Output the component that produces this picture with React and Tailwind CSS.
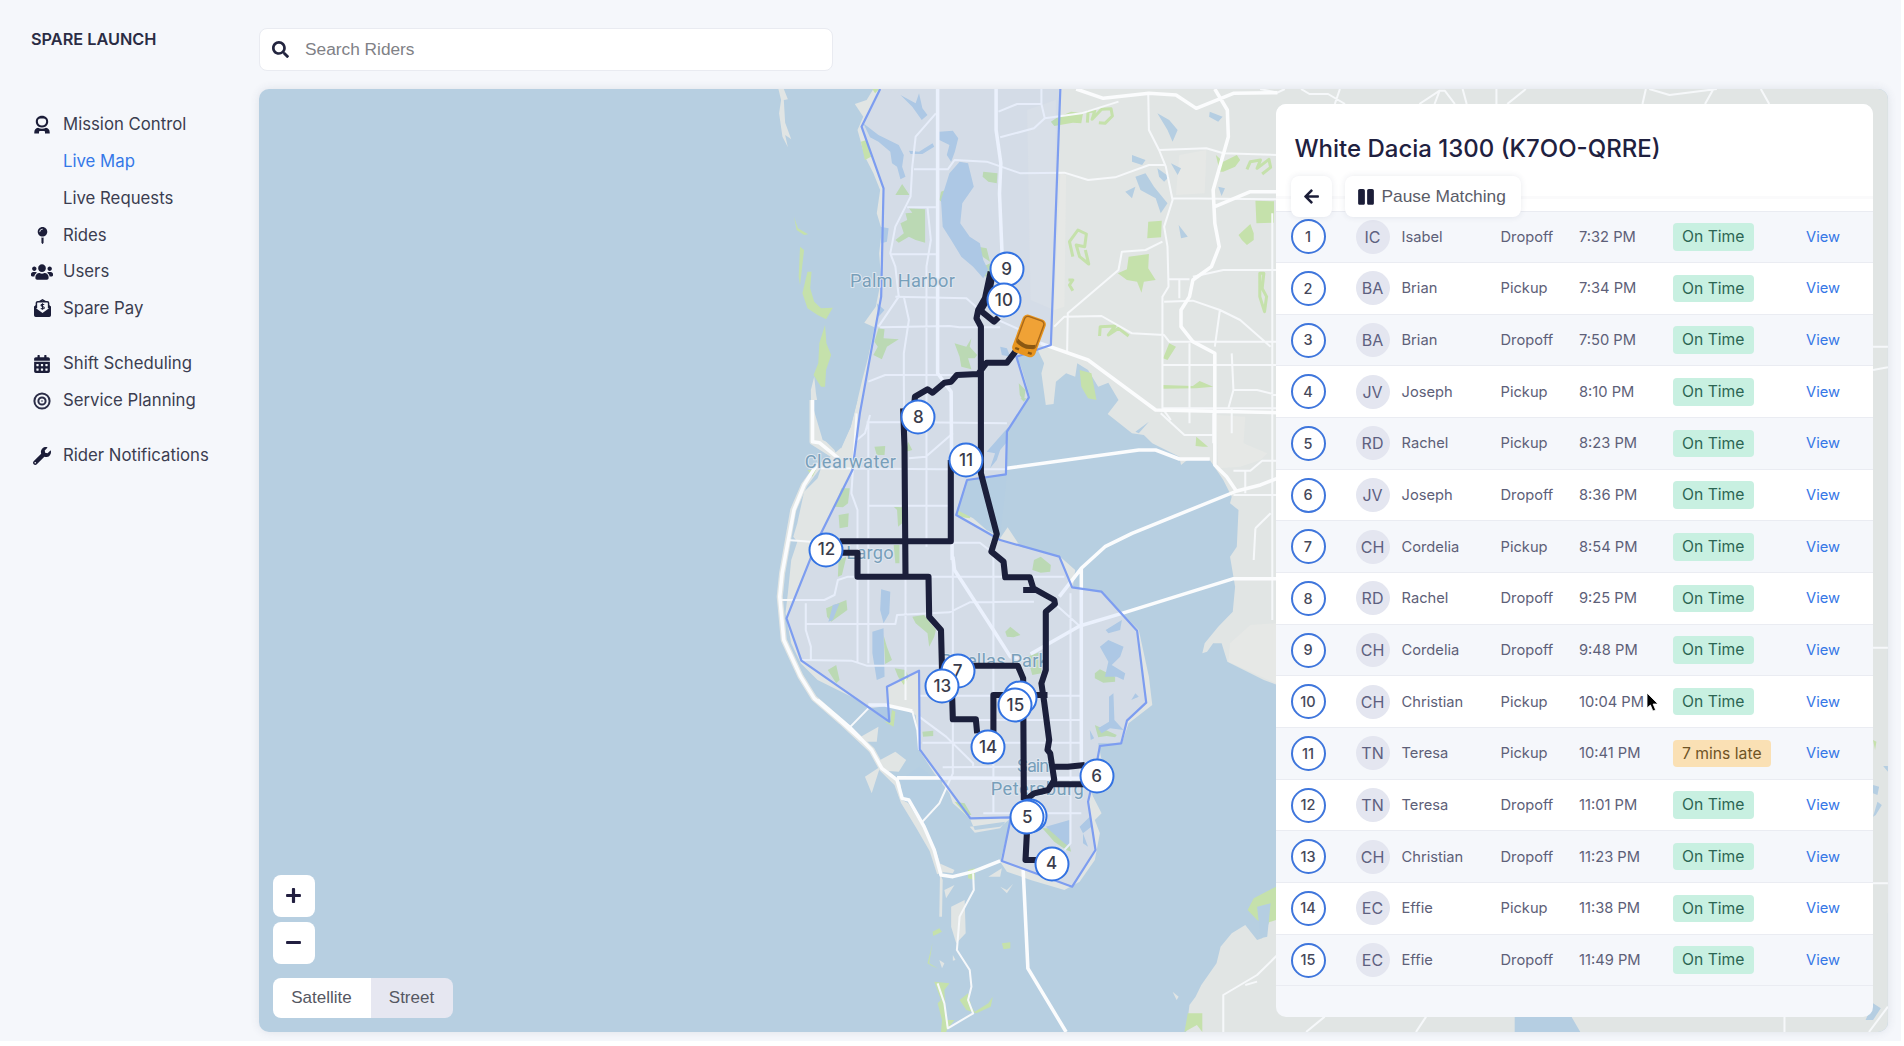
import React from "react";
import {
  FaMapPin,
  FaUsers,
  FaCalendarAlt,
  FaWrench,
  FaSearch,
  FaArrowLeft,
  FaPause,
  FaPlus,
  FaMinus,
} from "react-icons/fa";

/* ---------- sidebar icons ---------- */

const OperatorIcon = () => (
  <svg width="18" height="20" viewBox="0 0 18 20" fill="#1b1d38">
    <path
      fillRule="evenodd"
      d="M9 .8c3.600 0 6.200 2.500 6.200 5.900 0 .9-.2 1.800-.6 2.500A6.400 6.200 0 0 1 9 12.500a6.400 6.200 0 0 1-5.600-3.300C3 8.500 2.800 7.600 2.800 6.700 2.800 3.300 5.400.8 9 .8zM7.500 3.600C5.800 3.600 4.900 4.600 4.900 6v.8c0 2.200 1.700 3.800 4.100 3.800s4.100-1.600 4.100-3.800V6c0-1.400-.9-2.400-2.600-2.400z"
    />
    <path d="M1.300 18.600v-1.400c0-2.400 1.500-4 3.700-4.500 1.200.7 2.500 1.100 4 1.100s2.800-.4 4-1.100c2.200.5 3.700 2.100 3.700 4.500v1.400H12v-1.500a1 1 0 0 0-1-1H7a1 1 0 0 0-1 1v1.500z" />
  </svg>
);

const PayIcon = () => (
  <svg width="19" height="19" viewBox="0 0 19 19" fill="#1b1d38">
    <path d="M1 7.600 3 6v3.300l6.500 4.600L16 9.300V6l2 1.600v8.700a1.700 1.700 0 0 1-1.700 1.700H2.700A1.700 1.700 0 0 1 1 16.300z" />
    <path
      d="M3.400 9.200V4a1.300 1.300 0 0 1 1.300-1.300h9.600A1.300 1.300 0 0 1 15.600 4v5.200M6.500 2.600 9.500.9l3 1.700"
      fill="none"
      stroke="#1b1d38"
      strokeWidth="1.500"
    />
    <path
      d="M11.200 5.700c-.7-.6-3.200-.8-3.200.6 0 1.500 3.300.8 3.300 2.400 0 1.500-2.700 1.300-3.500.6M9.500 4.200v6.500"
      fill="none"
      stroke="#1b1d38"
      strokeWidth="1.100"
    />
  </svg>
);

const RingsIcon = () => (
  <svg width="18" height="18" viewBox="0 0 18 18" fill="none" stroke="#2b2d47">
    <circle cx="9" cy="9" r="7.600" strokeWidth="2" />
    <circle cx="9" cy="9" r="3.600" strokeWidth="2" />
    <circle cx="9" cy="9" r="0.800" fill="#2b2d47" stroke="none" />
  </svg>
);

const NAV = [
  { label: "Mission Control", icon: <OperatorIcon /> },
  { label: "Live Map", active: true },
  { label: "Live Requests" },
  { label: "Rides", icon: <FaMapPin size={17} /> },
  { label: "Users", icon: <FaUsers size={22} /> },
  { label: "Spare Pay", icon: <PayIcon /> },
  { label: "Shift Scheduling", icon: <FaCalendarAlt size={18} />, gap: true },
  { label: "Service Planning", icon: <RingsIcon /> },
  { label: "Rider Notifications", icon: <FaWrench size={18} />, gap: true },
];

function Sidebar() {
  return (
    <aside className="w-[258px] shrink-0 pl-[31px] pt-[28px]">
      <h1 className="text-[16.300px] leading-[22px] font-semibold text-[#2a2c44]">SPARE LAUNCH</h1>
      <nav className="mt-[56.300px] flex flex-col">
        {NAV.map((n) => (
          <a
            key={n.label}
            className={
              "flex h-[36.800px] items-center text-[16.750px] " +
              (n.gap ? "mt-[18.300px] " : "") +
              (n.active ? "text-[#3478e8]" : "text-[#3b3d50]")
            }
          >
            <span className="flex w-[22px] justify-center text-[#1b1d38]">{n.icon}</span>
            <span className="ml-[10px] whitespace-nowrap">{n.label}</span>
          </a>
        ))}
      </nav>
    </aside>
  );
}

/* ---------- map ---------- */

const LAND = [
  // Pinellas peninsula and the northern mainland
  "M365 27 345 60 310 72 335 110 318 150 340 230 365 280 385 330 375 400 390 450 382 520 388 600 372 680 338 728 368 742 350 830 332 900 318 960 298 1040 268 1105 215 1150 200 1195 160 1235 140 1330 128 1370 140 1385 122 1440 112 1540 105 1600 122 1690 150 1750 200 1800 300 1850 360 1885 400 1878 440 1880 490 1905 500 2010 545 2080 590 2140 600 2170 650 2215 665 2250 740 2240 772 2215 740 2345 760 2375 830 2400 930 2430 975 2405 1020 2340 1035 2260 1020 2220 1040 2200 1015 2150 1000 2110 1040 2040 1030 1990 1100 1990 1120 1930 1190 1875 1180 1790 1150 1650 1100 1600 1040 1535 955 1520 962 1470 915 1428 800 1400 762 1342 740 1375 650 1300 610 1305 640 1200 756 1182 762 1055 828 950 805 870 790 830 850 808 870 850 862 880 875 975 898 972 905 905 935 880 962 890 968 850 1000 870 1030 920 1060 908 1090 960 1058 1002 1130 1060 1165 1065 1190 1090 1270 1130 1275 1155 1300 1135 1360 1140 1400 1200 1425 1250 1420 1270 1445 1290 1440 1400 1420 1430 1435 1520 1428 1595 1385 1640 1345 1690 1338 1720 1352 1715 1370 1690 1395 1690 1412 1745 1520 1800 1560 1815H3366V27z",
  // southern shore
  "M1560 2470 1515 2575 1500 2580 1465 2535 1425 2560 1392 2600 1380 2650 1335 2715 1318 2750 1300 2775 1290 2856H3366V2400z",
  // inland strip along the eastern edge
  "M3200 1800V2500H3370V1800z",
  "M1250 2735 1268 2750 1262 2760z",
  // barrier islands
  "M84 27 92 60 86 100 96 170 112 202 104 165 122 178 104 128 100 60 112 58 100 27z",
  "M190 890 180 930 182 1080 200 1090 235 1120 262 1140 250 1110 215 1075 225 1035 205 1000 195 940z",
  "M340 2090 360 2140 385 2060z",
  "M385 2040 430 2015 462 2040 440 2075 400 2072z",
  "M650 2240 755 2225 740 2245 665 2258z",
  "M595 2480 635 2460 638 2560 610 2590 595 2540z",
  "M560 2350 605 2370 600 2380 560 2375zM575 2430 605 2415 580 2455zM705 2390 745 2365 740 2390zM740 2420 760 2430 778 2412 760 2440z",
  "M562 2380 570 2400 568 2510 560 2510z",
  "M560 2640 575 2650 568 2665zM600 2625 608 2640 600 2642z",
  "M320 1975 380 1940 375 1985 340 1985z",
];

const WATER = [
  "M620 245 645 250 662 320 628 370 622 430 650 470 680 490 690 540 705 570 690 595 660 560 625 530 595 480 570 440 565 360 590 280z",
  "M335 130 380 165 440 195 455 225 450 260 460 290 445 298 435 260 420 250 415 215 380 185 355 172z",
  "M560 155 600 152 616 175 606 215 595 245 582 225 590 195 560 180z",
  "M445 45 490 70 500 40 510 85 525 105 508 120 480 80z",
  "M470 212 500 215 540 190 545 200 510 222 475 222z",
  "M740 800 760 805 770 830 745 825z",
  "M1205 100 1240 120 1265 150 1250 185 1235 150z",
  "M1130 225 1170 240 1160 255 1130 245zM1205 265 1240 290 1225 305 1210 290zM1245 250 1275 265 1265 285z",
  "M1140 290 1170 280 1195 320 1235 370 1215 400 1200 355 1155 330zM1110 335 1140 320 1130 355z",
  "M1360 95 1398 110 1385 125 1358 110zM1385 320 1405 325 1395 348zM1268 435 1295 470 1275 475z",
  "M385 440 410 445 405 485 388 490zM375 670 398 690 380 710z",
  "M700 1115 765 1040 765 1080 740 1110 730 1140 710 1165 725 1120z",
  "M612 1290 640 1200 760 1185 740 1370 700 1350 660 1315z",
  "M388 1528 415 1535 412 1600 395 1630 385 1590zM362 1655 395 1645 398 1790 375 1800 362 1720z",
  "M245 1575 265 1570 245 1620 232 1625z",
  "M1052 1650 1100 1620 1095 1650 1060 1660zM1035 1700 1060 1680 1105 1700 1095 1730 1070 1755 1110 1780 1105 1800 1085 1790 1050 1790 1060 1745z",
  "M1062 1850 1075 1840 1078 1920 1105 1950 1065 1945 1040 1960 1030 1945 1062 1925zM1128 1860 1140 1840 1150 1850zM1005 1950 1018 1975 1008 1980z",
  "M875 2240 945 2220 945 2300 930 2290zM975 2240 1005 2210 1010 2240 985 2260zM985 2260 1000 2300 985 2290z",
  "M500 2060 540 2090 570 2100 560 2160 530 2200 505 2230 490 2180 450 2160 445 2100z",
  "M180 960 215 1080 270 1105 298 1040 318 960 300 960 225 960z",
  "M1140 1055 1180 1025 1150 1060zM1500 2480 1540 2470 1530 2570 1510 2575z",
  "M2262 2810H2430L2456 2856H2262zM3300 2820 3322 2770 3345 2785 3322 2820z",
  "M3322 2115 3340 2120 3335 2145 3322 2140zM3322 2210 3335 2165 3348 2175 3330 2205zM3352 2058H3366V2075z",
];

const SAND = [
  "M820 90 905 60 900 690 830 660z",
  "M1270 225 1350 210 1345 340 1260 345z",
  "M918 280 935 285 930 680 900 690z",
  "M1380 1005 1465 1010 1460 1090 1530 1120 1510 1140 1450 1160 1385 1165z",
  "M1420 1690 1480 1635 1556 1630V1810L1415 1745z",
];

const PARKS = [
  "M328 185 345 180 358 230 340 240zM362 27H382L370 40z",
  "M690 275 732 280 730 310 705 305 688 290zM430 345 450 312 472 345zM565 335 578 330 572 370 560 360z",
  "M470 385 518 388 518 488 490 480 470 470 440 488 430 480 455 460 445 430 465 420 460 400 480 398z",
  "M675 500 700 505 710 545 688 530zM690 560 710 550 715 580 695 590z",
  "M130 410 142 445 172 463 160 465 138 450zM148 500 160 510 148 615 144 590z",
  "M170 575 182 575 178 625 190 665 210 685 245 683 225 718 200 705 170 685 155 640z",
  "M222 735 226 790 240 825 225 870 222 920 210 920 188 885 202 850 205 790z",
  "M380 745 398 748 395 775 440 778 405 800 390 838 365 825 378 800 368 785z",
  "M605 790 640 800 655 775 650 800 672 825 665 835 645 835 655 868 625 860 620 830z",
  "M795 910 815 930 810 965 798 945z",
  "M890 125 910 112 950 95 985 100 980 130 955 128 900 138z",
  "M1120 530 1180 522 1178 565 1200 600 1165 605 1158 638 1145 605 1115 600 1088 580 1115 568z",
  "M1178 425 1218 422 1216 472 1175 475zM1495 362 1550 364V428L1498 430z",
  "M1378 225 1400 245 1440 225 1450 240 1435 260 1400 275 1390 275z",
  "M1445 465 1480 432 1490 460 1490 480 1470 495 1455 480z",
  "M1222 835 1240 790 1260 800 1235 840z",
  "M975 870 1010 880 1025 960 1000 955 980 920zM1220 915 1310 918 1330 903 1370 920 1320 925 1220 926z",
  "M368 1100 400 1098 398 1125 375 1125zM468 1085 480 1110 462 1115zM800 955 818 955 810 965z",
  "M270 1225 295 1225 290 1270 275 1282 250 1280 262 1250zM262 1305 292 1300 290 1340 265 1345z",
  "M170 1170 195 1170 185 1190zM425 1280 450 1282 450 1330 438 1340 435 1290z",
  "M615 1290 655 1305 650 1315 618 1310zM425 1395 442 1395 442 1450 430 1450z",
  "M225 1585 285 1560 288 1590 240 1625 228 1610zM262 1440 285 1430 272 1485 260 1490z",
  "M840 1440 860 1430 890 1455 888 1475 860 1478 835 1470z",
  "M480 1610 515 1605 550 1650 545 1670 530 1700 525 1660 490 1630z",
  "M395 1665 405 1700 420 1740 400 1752zM755 1655 770 1640 800 1665 780 1672 760 1670z",
  "M428 1765 460 1770 470 1790 455 1815 438 1790zM230 1770 255 1755 265 1800 255 1810z",
  "M820 1730 860 1715 862 1780 835 1785zM1020 1780 1035 1768 1080 1790 1080 1805 1045 1808 1020 1795z",
  "M1020 1935 1085 1965 1080 1972 1055 1968 1030 1972zM510 1955 542 1952 542 1968 512 1970z",
  "M420 1890 430 1895 425 1940 398 1925 415 1925zM605 2165 635 2170 655 2205 640 2205z",
  "M865 2245 885 2245 945 2295 950 2315 935 2310 900 2285zM645 2370 665 2365 665 2400 645 2395z",
  "M745 2590 770 2587 770 2605 750 2608zM540 2555 560 2545 568 2555 542 2568zM540 2588 530 2650 555 2665 538 2658 525 2650z",
  "M545 2705 590 2710 575 2730 580 2820 605 2820 585 2845 580 2856 565 2856 568 2820 555 2770 565 2760z",
  "M620 2760 645 2740 655 2780 665 2795 705 2770 718 2750 712 2780 670 2800 640 2790z",
  "M1295 2800 1338 2800 1338 2856 1322 2835 1285 2856z",
  "M1556 2420 1490 2455 1472 2490 1500 2520 1520 2532 1556 2520z",
  "M1320 1070 1355 1100 1340 1100 1318 1098zM3322 1980 3332 1985 3328 2010z",
];

// golf courses, drawn as loops of fairway
const FAIRWAYS =
  "M998 128 1000 95 1020 92 1012 118 1040 88 1068 86 1072 108 1050 130 1032 128M955 530 945 485 970 450 995 462 990 500 965 495 975 530 1002 552 992 510M942 600 955 600 945 615 955 632M1470 268 1480 245 1510 240 1500 265 1535 238 1540 262 1515 282M1508 580 1520 580 1515 625 1528 650 1522 695 1508 650zM1034 768 1036 740 1080 738 1060 765 1090 745 1120 768";

const HIGHWAYS = [
  "M555 27V880L595 935 598 1440",
  "M728 27V150L742 250 738 340 746 530",
  "M1375 27 1412 90 1415 170 1370 330 1375 430 1388 500 1365 560 1310 600 1300 650 1275 690 1275 740 1310 785 1375 820V1155L1410 1190 1440 1235",
  "M965 27 1045 55 1180 40 1260 45 1320 85 1430 40 1560 38",
  "M860 790 1000 840 1200 990 1560 998",
  "M1375 380 1480 335 1560 335",
  "M760 1165 1150 1110 1200 1110 1270 1137H1360",
  "M1560 1195 1510 1215 1440 1233 1130 1360 1050 1400 980 1465 915 1550",
  "M1560 1496H1430L1100 1600 975 1638 830 1722",
  "M980 1465V2100",
  "M600 1430 605 1470 720 1650 770 1730 820 1740",
  "M435 2093 800 2095 980 2095",
  "M808 2370 822 2665 935 2856",
  "M185 960V1085L205 1088 262 1135M200 1150 160 1215 130 1290 95 1480 88 1550 100 1680 150 1790 190 1855 270 1925 330 1980",
  "M200 1860 295 1942 360 2010 390 2065 435 2100 450 2155 470 2160 515 2240 545 2310 565 2385 600 2390 660 2375 740 2343",
  "M350 1875H400L480 1893",
];

const ROADS = [
  "M862 27V72H790L735 95M862 72 872 115 980 100 1090 65M872 115 840 145 740 172",
  "M550 100 490 170 480 260 475 350 430 440 415 520 430 560 440 650 380 740",
  "M485 268H585L605 240 700 245 800 280 930 278 1000 300 1080 292 1180 255 1230 255",
  "M465 382H550M415 523H550M430 650 640 655 690 700 800 750 860 790M385 742 590 738 620 742 740 742",
  "M525 382 535 480 522 560V1400M455 650 470 720 455 820V900L460 1500",
  "M350 905 400 885 640 885M355 1005 340 1060 310 1085M345 1027H500L760 1030M470 1135 520 1130 600 1060",
  "M200 1165 560 1168 760 1168M350 1030V1750M315 1000 300 1240 318 1290V1750",
  "M350 1277H600M110 1380 180 1385 270 1385M600 1388H680L720 1420V1780",
  "M90 1560H220L250 1545 260 1500 290 1490H930M165 1632H430L435 1605 590 1597 650 1567 840 1565",
  "M600 1440V2080L560 2170 510 2225M460 1500V1860M165 1570V1650L180 1700V1740M150 1740 300 1742 345 1757H560",
  "M500 1910 580 1970 660 2050V2060M720 1780V2200M948 1540V2290L930 2310M975 1638 900 1570",
  "M500 1847H980M600 1920H980M510 1988H980M570 2062 800 2060M690 2200H980",
  "M295 1942 350 1885M480 1893 495 1950 500 2010",
  "M1178 40 1180 150 1210 210 1230 260 1250 360 1225 440 1235 500 1238 620 1220 650V985L1245 1020",
  "M1210 210 1350 205 1400 220 1560 225M1250 355 1560 358M1238 598H1300M1270 598V655",
  "M1220 485 1170 510 1100 515 1090 570 940 700 938 820M900 740 930 710 1040 708 1130 760 1225 765 1240 785 1560 785",
  "M1225 665 1310 662 1390 690 1450 720 1540 800M1310 590 1400 570H1560M1390 690 1375 800",
  "M1220 855H1560M1220 985H1560M1300 790V985M1425 820 1430 930 1415 985M1430 930H1500L1560 945",
  "M1215 1000 1285 1065H1370M1300 960V1030M1425 985V1060M1545 400V1620M1495 1345 1490 1440M1540 1300 1495 1345M1370 1090V1000",
  "M1560 1245H1430M1430 1172H1480L1515 1142H1560M1465 1172V1240",
  "M660 2380 662 2430 620 2510 612 2610 650 2670 655 2720 645 2760 660 2800 585 2845 575 2770 555 2710",
  "M1560 2625 1500 2685 1400 2745V2856M1465 2715 1500 2705",
  "M1509 27 1560 38 1582 27M1630 27 1655 42 1710 42 1760 72M1730 72 1745 27M1980 72 2040 32 2055 32 2085 72M2040 32 2025 72M2108 27 2120 72M2208 27V72M2295 27 2240 72M2650 27 2640 72M2660 27 2720 45 2860 27M2825 72 2850 27M2990 27 3015 72",
  "M3322 800H3366M3322 870 3366 862M3322 1703H3366M3322 2410H3366M1645 2856 1700 2810M1970 2856 2000 2810M3060 2810V2856M3310 2856 3366 2780",
];

const BOUNDARY =
  "M385 27 330 140 395 325 388 650 350 860 325 1000 303 1170 205 1370 108 1615 152 1742 412 1925 405 1820 500 1772 502 2008 652 2215 772 2212 745 2343 953 2420 1022 2310 1000 2165 1022 2070 1035 1998 1098 1990 1115 1922 1172 1868 1145 1652 1040 1535 953 1522 915 1430 740 1380 610 1305 642 1200 757 1183 760 1055 825 952 788 830 890 795 918 27";

const ROUTES = [
  "M712 575 695 655 675 690 670 715 683 740V1180L730 1362 714 1415 750 1445 755 1492H828L838 1525 900 1560 902 1572 875 1595V1770L862 1810 870 1865 885 1980 880 2010 888 2020 900 2100 882 2130 840 2140 815 2160",
  "M718 580 704 655 682 692 722 725 735 712",
  "M808 1530 850 1530",
  "M785 815 760 848H700L675 882 612 885 595 905 575 908 540 938 525 928 488 950 485 980",
  "M453 985 457 1100 460 1490",
  "M594 1140V1384H265",
  "M270 1418H318V1490H528L530 1610 565 1650 568 1770",
  "M640 1757H792L808 1795 810 2160",
  "M598 1850 600 1918H668L672 1960",
  "M720 1960V1845H880",
  "M898 2060 940 2060 990 2055M898 2113H990",
  "M820 2240 815 2340H850",
];

const STOPS = [
  { n: "9", x: 759, y: 565 },
  { n: "10", x: 751, y: 658 },
  { n: "8", x: 498, y: 1010 },
  { n: "11", x: 639, y: 1138 },
  { n: "12", x: 226, y: 1407 },
  { n: "7", x: 614, y: 1771 },
  { n: "13", x: 569, y: 1817 },
  { n: "", x: 798, y: 1851 },
  { n: "15", x: 785, y: 1873 },
  { n: "14", x: 704, y: 1999 },
  { n: "6", x: 1025, y: 2087 },
  { n: "", x: 828, y: 2205 },
  { n: "5", x: 820, y: 2210 },
  { n: "4", x: 892, y: 2349 },
];

const LABELS = [
  { t: "Palm Harbor", x: 296, y: 620, w: 310 },
  { t: "Clearwater", x: 162, y: 1163, w: 270 },
  { t: "Largo", x: 285, y: 1438, w: 140 },
  { t: "Pinellas Park", x: 563, y: 1760, w: 318 },
  { t: "Saint", x: 790, y: 2077, w: 110 },
  { t: "Petersburg", x: 712, y: 2146, w: 275 },
];

function MapCanvas() {
  return (
    <svg
      className="absolute inset-0 h-full w-full"
      viewBox="258.500 89 1629.500 943"
      preserveAspectRatio="none"
    >
      <g transform="translate(749.5 80) scale(0.33806 0.33333)" fill="none" strokeLinejoin="round">
        <path d={LAND.join("")} fill="#e1e5e4" />
        <path
          d="M185 960V1085L262 1135 200 1160 160 1215 128 1290 95 1480 88 1550 100 1680 150 1790 190 1855 270 1925 360 2010 390 2065 435 2110 455 2165 500 2240 540 2310 562 2380"
          stroke="#e1e5e4"
          strokeWidth="18"
        />
        <path d={SAND.join("")} fill="#e6e8e6" />
        <path d={PARKS.join("")} fill="#c5e1ab" />
        <path d={FAIRWAYS} stroke="#c5e1ab" strokeWidth="9" />
        <path d={WATER.join("")} fill="#b5cee2" />
        <path d={ROADS.join("")} stroke="#f6f8fa" strokeWidth="6" />
        <path d={HIGHWAYS.join("")} stroke="#fbfcfd" strokeWidth="10.500" />
        <path d={BOUNDARY + "z"} fill="#7098ff" fillOpacity="0.110" />
        <path d={BOUNDARY} stroke="#7d9df0" strokeWidth="6.500" />
        {LABELS.map((l) => (
          <text
            key={l.t}
            x={l.x}
            y={l.y}
            textLength={l.w}
            fill="#789fba"
            stroke="#dfe6ef"
            strokeWidth="6"
            paintOrder="stroke"
            className="font-['Roboto',sans-serif] text-[54px]"
          >
            {l.t}
          </text>
        ))}
        <path d={ROUTES.join("")} stroke="#1b1f3b" strokeWidth="18" />
        <g transform="translate(826 766) rotate(20)">
          <rect x="-36" y="-58" width="72" height="120" rx="16" fill="#e8951f" />
          <rect x="-30" y="-53" width="60" height="88" rx="11" fill="#f0a236" stroke="#a8681a" strokeWidth="4" />
          <path d="M-28 20Q0 36 28 20V32Q0 50-28 32z" fill="#8a5712" />
          <path d="M-26 50h12M14 50h12" stroke="#8a5712" strokeWidth="7" />
        </g>
      </g>
    </svg>
  );
}

function Stop({ n, x, y }) {
  return (
    <div
      className="absolute flex h-[35px] w-[35px] -translate-x-1/2 -translate-y-1/2 items-center justify-center rounded-full border-[2.500px] border-[#3272e2] bg-white text-[17px] font-medium text-[#3a3c4c]"
      style={{ left: 491.5 + x * 0.33806, top: y / 3 - 8.4 }}
    >
      {n}
    </div>
  );
}

/* ---------- itinerary panel ---------- */

const ROWS = [
  ["IC", "Isabel", "Dropoff", "7:32 PM"],
  ["BA", "Brian", "Pickup", "7:34 PM"],
  ["BA", "Brian", "Dropoff", "7:50 PM"],
  ["JV", "Joseph", "Pickup", "8:10 PM"],
  ["RD", "Rachel", "Pickup", "8:23 PM"],
  ["JV", "Joseph", "Dropoff", "8:36 PM"],
  ["CH", "Cordelia", "Pickup", "8:54 PM"],
  ["RD", "Rachel", "Dropoff", "9:25 PM"],
  ["CH", "Cordelia", "Dropoff", "9:48 PM"],
  ["CH", "Christian", "Pickup", "10:04 PM"],
  ["TN", "Teresa", "Pickup", "10:41 PM", "7 mins late"],
  ["TN", "Teresa", "Dropoff", "11:01 PM"],
  ["CH", "Christian", "Dropoff", "11:23 PM"],
  ["EC", "Effie", "Pickup", "11:38 PM"],
  ["EC", "Effie", "Dropoff", "11:49 PM"],
];

function Row({ row, i }) {
  const [initials, name, kind, time, late] = row;
  return (
    <div
      className={
        "grid h-[51.670px] shrink-0 grid-cols-[66px_45px_99px_78.500px_94px_133px_1fr] items-center border-b border-[#eaecf2] pl-[15px] text-[14.700px] text-[#5d6078] " +
        (i % 2 === 0 ? "bg-[#f5f7fb]" : "bg-white")
      }
    >
      <span className="flex h-[35px] w-[35px] items-center justify-center rounded-full border-2 border-[#3f76dc] bg-white text-[14.500px] font-medium text-[#45485a]">
        {i + 1}
      </span>
      <span className="-ml-px flex h-[34px] w-[34px] items-center justify-center rounded-full bg-[#e4e6f0] text-[16px] text-[#5d6080]">
        {initials}
      </span>
      <span>{name}</span>
      <span>{kind}</span>
      <span className="whitespace-nowrap">{time}</span>
      <span
        className={
          "flex h-[27.500px] w-fit items-center whitespace-nowrap rounded-[4px] px-[9px] text-[15.700px] " +
          (late ? "bg-[#fae0b4] text-[#6f5426]" : "bg-[#c8f0e1] text-[#2c6553]")
        }
      >
        {late || "On Time"}
      </span>
      <span className="text-[#3677e6]">View</span>
    </div>
  );
}

function Panel() {
  return (
    <section className="absolute right-[15.500px] top-[15px] flex h-[913px] w-[597px] flex-col overflow-hidden rounded-[10px] bg-[#f5f7fb]">
      <header className="relative z-10 h-[107.500px] shrink-0 border-b border-[#eaecf2] bg-white pl-[15px] pt-[29px]">
        <h2 className="pl-[4px] text-[24px] leading-[32px] font-medium text-[#1f2140]">
          White Dacia 1300 (K7OO-QRRE)
        </h2>
        <div className="absolute inset-x-0 top-[92px] h-[3px] bg-[#fafafb]" />
        <div className="relative mt-[11px] flex gap-[13px]">
          <button className="flex h-[41px] w-[41px] items-center justify-center rounded-[8px] bg-white text-[#1b1d38] shadow-[0_0_6px_rgba(40,50,90,0.100)]">
            <FaArrowLeft size={17} />
          </button>
          <button className="flex h-[41px] w-[176px] items-center rounded-[8px] bg-white pl-[12px] font-['Liberation_Sans',sans-serif] text-[17.350px] text-[#5a5c68] shadow-[0_0_6px_rgba(40,50,90,0.100)]">
            <FaPause size={18} className="mr-[7px] text-[#1b1d38]" />
            Pause Matching
          </button>
        </div>
      </header>
      {ROWS.map((r, i) => (
        <Row key={i} row={r} i={i} />
      ))}
      <svg className="absolute left-[369px] top-[588px] z-20" width="14" height="22" viewBox="0 0 14 22">
        <path d="M2 1v15l3.400-3 2.500 6 2.700-1.100-2.500-5.900H13z" fill="#000" stroke="#fff" strokeWidth="0.800" />
      </svg>
    </section>
  );
}

function MapButtons() {
  return (
    <div className="absolute bottom-[14.500px] left-[14px] flex flex-col">
      <button className="flex h-[42px] w-[42px] items-center justify-center rounded-[8px] bg-white text-[#221f40]">
        <FaPlus size={17} />
      </button>
      <button className="mt-[5px] flex h-[42px] w-[42px] items-center justify-center rounded-[8px] bg-white text-[#221f40]">
        <FaMinus size={17} />
      </button>
      <div className="mt-[14px] flex h-[40px] w-[180px] overflow-hidden rounded-[8px] font-['Liberation_Sans',sans-serif] text-[17px] text-[#555762]">
        <span className="flex w-[98px] items-center justify-center bg-white">Satellite</span>
        <span className="flex flex-1 items-center justify-center bg-[#e6e7f1]">Street</span>
      </div>
    </div>
  );
}

export default function App() {
  return (
    <div className="h-[1046px] w-[1904px] overflow-hidden bg-white font-['Inter',sans-serif]">
      <div className="flex h-[1041px] w-[1901px] bg-[#f5f7fb]">
        <Sidebar />
        <main className="flex flex-col">
          <div className="ml-px mt-[28px] flex h-[43px] w-[574px] items-center rounded-[8px] border border-[#e9ebf1] bg-white pl-[12px]">
            <FaSearch size={17} className="text-[#23253f]" />
            <span className="ml-[16px] pt-px font-['Liberation_Sans',sans-serif] text-[17.300px] text-[#808186]">
              Search Riders
            </span>
          </div>
          <div className="relative ml-[0.500px] mt-[18px] h-[943px] w-[1629.500px] overflow-hidden rounded-[10px] bg-[#b7cfe1] shadow-[0_0_10px_rgba(60,70,110,0.120)]">
            <MapCanvas />
            {STOPS.map((s, i) => (
              <Stop key={i} {...s} />
            ))}
            <MapButtons />
            <Panel />
          </div>
        </main>
      </div>
    </div>
  );
}
